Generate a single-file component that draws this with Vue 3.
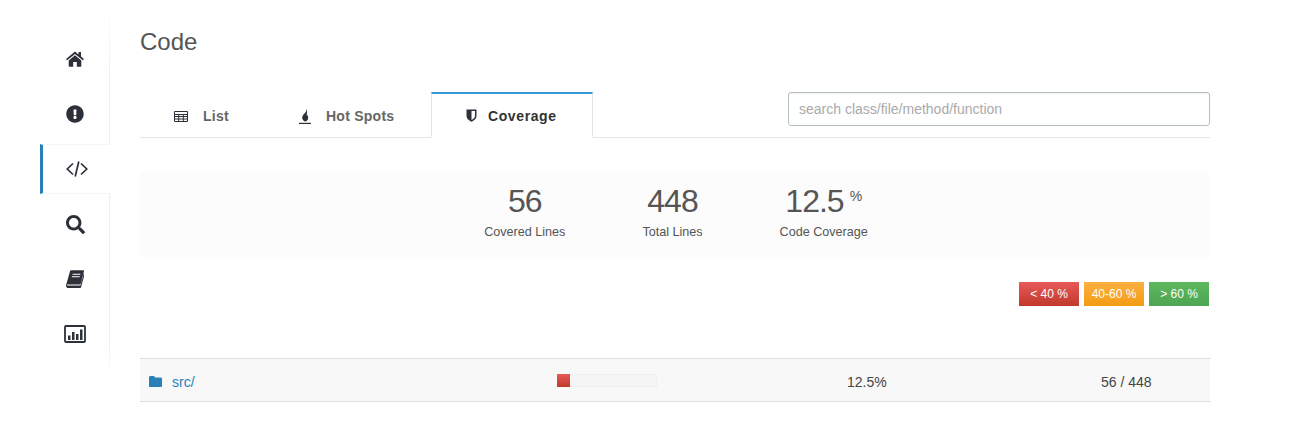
<script setup>
const navItems = [
  { id: 'home', w: 18, h: 16, vb: '0 0 18 16', active: false },
  { id: 'alert', w: 18, h: 18, vb: '0 0 512 512', active: false },
  { id: 'code', w: 22, h: 16, vb: '0 0 22 16', active: true },
  { id: 'search', w: 19, h: 19, vb: '0 0 512 512', active: false },
  { id: 'book', w: 18, h: 18, vb: '0 0 18 18', active: false },
  { id: 'chart', w: 22, h: 18, vb: '0 0 22 18', active: false }
]

const tabs = [
  { id: 'list', label: 'List', active: false },
  { id: 'hot', label: 'Hot Spots', active: false },
  { id: 'coverage', label: 'Coverage', active: true }
]

const stats = [
  { value: '56', label: 'Covered Lines' },
  { value: '448', label: 'Total Lines' },
  { value: '12.5', unit: '%', label: 'Code Coverage' }
]

const legend = [
  { label: '< 40 %', kind: 'low' },
  { label: '40-60 %', kind: 'mid' },
  { label: '> 60 %', kind: 'high' }
]

const percent = 12.5
</script>

<template>
  <div class="page">
    <!-- side navigation -->
    <nav class="sidebar">
      <a v-for="item in navItems" :key="item.id" class="nav-item" :class="{ active: item.active }">
        <svg :width="item.w" :height="item.h" :viewBox="item.vb" class="nav-icon">
          <template v-if="item.id === 'home'">
            <path d="M9 .4 0 7.900l1.200 1.400L9 2.900l7.800 6.400L18 7.900l-3-2.500V1h-2.400v2.400z" />
            <path d="M9 4.300 2.700 9.500v5.600c0 .4.200.6.600.6h3.900V11h3.600v4.700h3.900c.4 0 .6-.2.600-.6V9.500z" />
          </template>
          <path v-else-if="item.id === 'alert'" d="M504 256c0 136.997-111.043 248-248 248S8 392.997 8 256C8 119.083 119.043 8 256 8s248 111.083 248 248zm-248 50c-25.405 0-46 20.595-46 46s20.595 46 46 46 46-20.595 46-46-20.595-46-46-46zm-43.673-165.346l7.418 136c.347 6.364 5.609 11.346 11.982 11.346h48.546c6.373 0 11.635-4.982 11.982-11.346l7.418-136c.375-6.874-5.098-12.654-11.982-12.654h-63.383c-6.884 0-12.356 5.780-11.981 12.654z" />
          <g v-else-if="item.id === 'code'" fill="none" stroke="#2c3038" stroke-width="1.700">
            <path d="M7 2.500 1.200 8 7 13.500" />
            <path d="M15 2.500 20.800 8 15 13.500" />
            <path d="M12.800 .5 9.200 15.500" />
          </g>
          <path v-else-if="item.id === 'search'" d="M505 442.700 405.300 343c-4.500-4.500-10.600-7-17-7H372c27.600-35.300 44-79.700 44-128C416 93.100 322.900 0 208 0S0 93.100 0 208s93.100 208 208 208c48.300 0 92.700-16.400 128-44v16.300c0 6.400 2.500 12.500 7 17l99.700 99.700c9.400 9.400 24.600 9.400 33.900 0l28.300-28.300c9.400-9.400 9.400-24.600.1-34zM208 336c-70.700 0-128-57.200-128-128 0-70.700 57.200-128 128-128 70.700 0 128 57.200 128 128 0 70.700-57.200 128-128 128z" />
          <template v-else-if="item.id === 'book'">
            <path d="M5 .3h12.300c.5 0 .8.400.7.900l-3.200 12.300c-.2.700-.6 1-1.300 1H1.900c-.6 0-1 .1-.8.900l.1.200h12.400c.5 0 .8-.2 1-.7l3.200-11.500.5.500c.2.300.2.600.1 1l-3.300 12.200c-.2.800-.8 1.300-1.600 1.300H2.600c-1.100 0-2.100-.7-2.400-1.800-.2-.6-.2-1.100 0-1.800L4 1.300C4.200.7 4.500.3 5 .3z" />
            <path d="M6.700 3.800h7.800l-.3 1H6.400zM6 6.200h7.800l-.3 1H5.700z" fill="#fff" />
          </template>
          <template v-else>
            <rect x="1" y="1" width="20" height="16" rx="1" fill="none" stroke="#2c3038" stroke-width="1.800" />
            <path d="M4 10.500h2.500V15H4zM8 7h2.500v8H8zM12 9h2.500v6H12zM16 4.500h2.500V15H16z" />
          </template>
        </svg>
      </a>
    </nav>

    <main class="content">
      <h1 class="title">Code</h1>

      <!-- tabs and search -->
      <div class="tabbar">
        <ul class="tabs">
          <li v-for="tab in tabs" :key="tab.id" class="tab" :class="[tab.id, { active: tab.active }]">
            <svg v-if="tab.id === 'list'" width="14" height="11" viewBox="0 0 14 11" class="tab-icon">
              <path fill="none" stroke="currentColor" d="M.5.500h13v10H.5zM.5 3.500h13M.5 5.500h13M.5 8h13M4.700 3.500V10.500M9.300 3.500V10.500" />
            </svg>
            <svg v-else-if="tab.id === 'hot'" width="12" height="15" viewBox="0 0 12 15" class="tab-icon">
              <path fill="currentColor" d="M7.400 0c.3 2.200-.9 3.400-2 4.600C4.200 5.900 3.200 7.100 3.200 8.800c0 1.800 1.300 3.200 2.900 3.700 1.700-.2 3.100-1.700 3.100-3.800 0-1.400-.6-2.300-1.300-3.100-.1.700-.3 1-.7 1.300C8.300 4.400 8.500 1.700 7.400 0z" />
              <path fill="currentColor" d="M0 13.800h12V15H0z" />
            </svg>
            <svg v-else width="11" height="13" viewBox="0 0 11 13" class="tab-icon">
              <path fill="currentColor" d="M.5.500h10v6.200c0 3-2.600 4.800-5 6-2.400-1.200-5-3-5-6z" />
              <path fill="#fff" d="M5.500 2h3.500v4.700c0 2-1.800 3.300-3.500 4.300z" />
            </svg>
            <span>{{ tab.label }}</span>
          </li>
        </ul>
        <input class="search" type="text" placeholder="search class/file/method/function" />
      </div>

      <!-- summary numbers -->
      <section class="summary">
        <div v-for="stat in stats" :key="stat.label" class="stat">
          <div class="stat-value">{{ stat.value }}<span v-if="stat.unit" class="stat-unit">{{ stat.unit }}</span></div>
          <div class="stat-label">{{ stat.label }}</div>
        </div>
      </section>

      <!-- legend -->
      <div class="legend">
        <span v-for="l in legend" :key="l.kind" class="badge" :class="l.kind">{{ l.label }}</span>
      </div>

      <!-- directory rows -->
      <div class="row">
        <div class="cell-name">
          <svg width="13" height="11" viewBox="0 0 13 11" class="folder">
            <path fill="#2980b9" d="M1.300 0h3.200c.7 0 1 .3 1.200.9l.2.500h5.800c.7 0 1.300.6 1.300 1.300v7c0 .7-.6 1.300-1.300 1.300H1.300C.6 11 0 10.400 0 9.700V1.300C0 .6.600 0 1.300 0z" />
          </svg>
          <a class="link">src/</a>
        </div>
        <div class="cell-bar">
          <div class="bar"><div class="bar-fill" :style="{ width: percent + '%' }"></div></div>
        </div>
        <div class="cell-pct">{{ percent }}%</div>
        <div class="cell-count">56 / 448</div>
      </div>
    </main>
  </div>
</template>

<style scoped>
.page {
  display: flex;
  width: 1313px;
  height: 422px;
  overflow: hidden;
  font-family: "Liberation Sans", Arial, sans-serif;
  color: #555;
  background: #fff;
}

.sidebar {
  box-sizing: border-box;
  width: 70px;
  height: 380px;
  margin-left: 40px;
  padding-top: 34px;
  display: flex;
  flex-direction: column;
  gap: 5px;
  background: linear-gradient(to bottom, transparent, #eee 20%, #eee 90%, transparent) right top / 1px 100% no-repeat;
}

.nav-item {
  box-sizing: border-box;
  height: 50px;
  display: flex;
  align-items: center;
  justify-content: center;
}

.nav-item.active {
  background: #fff;
  border-left: 3px solid #2980b9;
  border-top: 1px solid #f5f5f5;
  border-bottom: 1px solid #f5f5f5;
}

.nav-icon {
  fill: #2c3038;
}

.content {
  width: 1070px;
  margin-left: 30px;
}

.title {
  margin: 0;
  padding-top: 28px;
  height: 64px;
  font-size: 24px;
  font-weight: 400;
  line-height: 28px;
  color: #555;
}

.tabbar {
  display: flex;
  justify-content: space-between;
  box-sizing: border-box;
  height: 46px;
  border-bottom: 1px solid #e5e5e5;
}

.tabs {
  display: flex;
  margin: 0;
  padding: 0;
  list-style: none;
}

.tab {
  box-sizing: border-box;
  height: 46px;
  display: flex;
  align-items: center;
  padding-top: 2px;
  font-size: 14px;
  font-weight: 700;
  letter-spacing: .25px;
  color: #666;
}

.tab.list { width: 125px; padding-left: 34px; }
.tab.hot { width: 166px; padding-left: 34px; }
.tab.coverage {
  width: 162px;
  padding-top: 0;
  padding-left: 34px;
  letter-spacing: .6px;
  border: 1px solid #e5e5e5;
  border-top: 2px solid #3498db;
  border-bottom: 1px solid #fff;
  color: #333;
}

.tab-icon {
  flex: none;
  margin-right: 15px;
  color: #2c3038;
}
.tab.coverage .tab-icon { margin-right: 11px; }

.search {
  box-sizing: border-box;
  width: 422px;
  height: 34px;
  margin: 0;
  padding: 0 10px;
  font-family: inherit;
  font-size: 14px;
  color: #555;
  background: #fff;
  border: 1px solid #b4c0c6;
  border-radius: 3px;
  box-shadow: inset 0 1px 1px rgba(0, 0, 0, .05);
  outline: none;
}
.search::placeholder { color: #aaa; opacity: 1; }

.summary {
  margin-top: 35px;
  height: 84px;
  padding-left: 2px;
  display: flex;
  justify-content: center;
  gap: 77px;
  background: #fcfcfc;
}

.stat { text-align: center; }

.stat-value {
  margin-top: 10px;
  font-size: 32px;
  line-height: 36px;
  letter-spacing: -1px;
  color: #555;
}

.stat-unit {
  margin-left: 6px;
  font-size: 14px;
  line-height: 0;
  letter-spacing: 0;
  vertical-align: 11px;
}

.stat-label {
  margin-top: 5px;
  font-size: 12.6px;
  line-height: 16px;
  color: #555;
}

.legend {
  margin-top: 25px;
  display: flex;
  justify-content: flex-end;
  gap: 5px;
  padding-right: 1px;
}

.badge {
  width: 60px;
  height: 24px;
  text-align: center;
  font-size: 12px;
  line-height: 24px;
  color: #fff;
}
.badge.low { background: linear-gradient(#e8595a, #c0392b); }
.badge.mid { background: linear-gradient(#fbb040, #f39c12); }
.badge.high { background: linear-gradient(#5cb85c, #4fa553); }

.row {
  box-sizing: border-box;
  margin-top: 52px;
  height: 44px;
  display: grid;
  grid-template-columns: 417px 290px 254px 1fr;
  align-items: center;
  background: #f8f8f8;
  border-top: 1px solid #ddd;
  border-bottom: 1px solid #ddd;
  font-size: 14px;
  color: #444;
}

.cell-name {
  display: flex;
  align-items: center;
  padding-left: 9px;
  padding-top: 2px;
}

.cell-pct,
.cell-count {
  padding-top: 4px;
}

.folder { margin-right: 10px; }

.link { color: #2980b9; padding-top: 2px; }

.bar {
  width: 100px;
  height: 13px;
  background: #f5f5f5;
  box-shadow: inset 0 0 0 1px #f0f0f0;
}

.bar-fill {
  height: 100%;
  background: linear-gradient(#e8595a, #c0392b);
}
</style>

<style>
body { background: #fff; }
</style>
